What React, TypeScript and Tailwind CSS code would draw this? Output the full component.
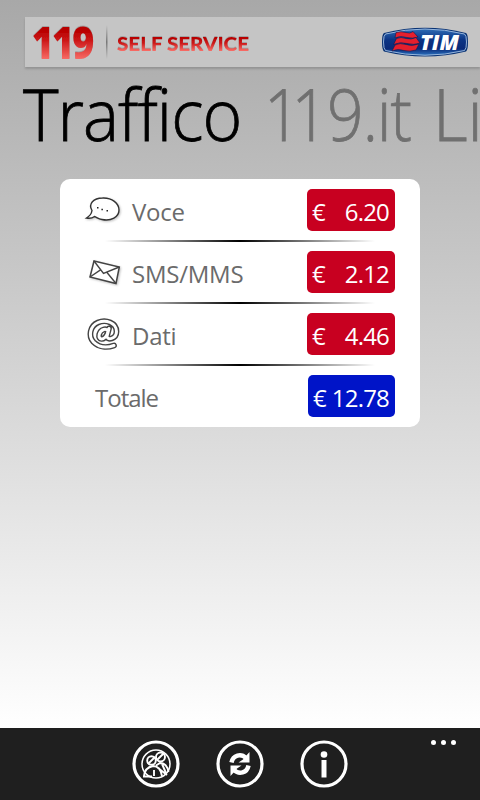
import type { ReactNode } from "react";

function HeaderBanner() {
  return (
    <header className="ml-[25px] mt-[17px] h-[50px] shrink-0 bg-[#c5c5c5] shadow-[0_2px_2px_rgba(0,0,0,0.16)]">
      <svg width="455" height="50" viewBox="0 0 455 50" aria-label="119 Self Service TIM" className="overflow-visible">
        <defs>
          <linearGradient id="red" x1="0" y1="10" x2="0" y2="43" gradientUnits="userSpaceOnUse">
            <stop offset="0.1" stopColor="#b80000" />
            <stop offset="0.4" stopColor="#cc1818" />
            <stop offset="1" stopColor="#fa6e68" />
          </linearGradient>
          <linearGradient id="redSmall" x1="0" y1="21" x2="0" y2="34" gradientUnits="userSpaceOnUse">
            <stop offset="0" stopColor="#b80000" />
            <stop offset="0.4" stopColor="#cc1c1c" />
            <stop offset="1" stopColor="#fa6e68" />
          </linearGradient>
          <linearGradient id="divider" x1="0" y1="0" x2="0" y2="1">
            <stop offset="0" stopColor="#777" stopOpacity="0" />
            <stop offset="0.5" stopColor="#777" />
            <stop offset="1" stopColor="#777" stopOpacity="0" />
          </linearGradient>
          <linearGradient id="blue" x1="0" y1="0" x2="0" y2="1">
            <stop offset="0" stopColor="#2e6cb4" />
            <stop offset="0.4" stopColor="#0c3585" />
            <stop offset="0.75" stopColor="#0a2a78" />
            <stop offset="1" stopColor="#2a70bd" />
          </linearGradient>
          <filter id="glow" x="-10%" y="-20%" width="120%" height="140%">
            <feDropShadow dx="0" dy="-0.5" stdDeviation="0.7" floodColor="#444" floodOpacity="0.55" />
          </filter>
        </defs>
        <g filter="url(#glow)">
          <text
            transform="scale(0.86 1)"
            x="8 31.500 55"
            y="42"
            fill="url(#red)"
            fontFamily="Open Sans, sans-serif"
            fontWeight="800"
            fontSize="44"
          >
            119
          </text>
          <text x="92" y="34" fill="url(#redSmall)" fontFamily="Lato, sans-serif" fontWeight="900" fontSize="18" textLength="132" lengthAdjust="spacingAndGlyphs">
            SELF SERVICE
          </text>
        </g>
        <rect x="81" y="8" width="1.500" height="34" fill="url(#divider)" />
        <path
          d="M359 16Q400 5.500 441 16Q443 17 443 25Q443 33 441 34.500Q400 44.500 359 34.500Q357 33 357 25Q357 17 359 16Z"
          fill="#0a3374"
        />
        <path
          d="M360.500 17Q400 7 439.500 17Q441.500 18 441.500 25Q441.500 32 439.500 33.500Q400 43 360.500 33.500Q358.500 32 358.500 25Q358.500 18 360.500 17Z"
          fill="url(#blue)"
          stroke="#a5c1e3"
          strokeWidth="0.900"
        />
        <g fill="#e51f2d" stroke="#061d58" strokeWidth="0.600">
          <path d="M371 15.500Q376 14 381 15.500Q385 17 388 14.500L393 20Q388 22 382 20.500Q375 18.500 370 21Z" />
          <path d="M371.500 21.500Q376 19.500 381 21.500Q386 23 391 20.500L395 26Q389 28.500 382 26.500Q375 24.500 368.500 27.500Z" />
          <path d="M370 28Q375 25.500 381 27.500Q387 29.500 394 27L391 33Q385 35 379 33.500Q373 31.500 367 34Z" />
        </g>
        <text x="395" y="33" fill="#fff" fontFamily="Open Sans, sans-serif" fontWeight="800" fontStyle="italic" fontSize="21" textLength="39" lengthAdjust="spacingAndGlyphs">
          TIM
        </text>
      </svg>
    </header>
  );
}

function SpeechIcon() {
  return (
    <svg width="40" height="40" viewBox="0 0 40 40" fill="none" className="[filter:drop-shadow(1px_1px_1px_#9999)]">
      <path
        d="M9 20.500C5 14 10.500 8 19.500 8C29 7.500 36 13.500 36 20C36 27 28 31.500 19 29.500C15 29 13.500 27 11.500 26.500C9.500 28 6.500 28.500 3.500 28C6 26.500 8.500 24 9 20.500Z"
        fill="#fff"
        stroke="#333"
        strokeWidth="1.400"
      />
      <path d="M14 17.700h1.500M18.400 19.400h1.500M23.500 20.700h1.500" stroke="#222" strokeWidth="1.500" />
    </svg>
  );
}

function MailIcon() {
  return (
    <svg width="40" height="40" viewBox="0 0 40 40" fill="none" className="[filter:drop-shadow(1px_1px_1px_#9999)]">
      <path d="M11 9L36.300 15L33 31.500L7 25Z" fill="#fff" stroke="#444" strokeWidth="1.500" />
      <path d="M11 9L20.500 21.500L36.300 15M7 25L17.500 17.800M33 31.500L24 20.500" stroke="#444" strokeWidth="1.400" />
    </svg>
  );
}

function AtIcon() {
  const curve =
    "M25 17.500C24 13.500 17.500 15 16.200 20.500C15 26 21 27 24.200 20L26 14.500L24 22C23.500 27 33.500 25 33.500 17.500C33.500 9 23 5 15 8.500C7 12 5 22 10.500 28C16 33.500 24 34 31 31.500";
  return (
    <svg width="40" height="40" viewBox="0 0 40 40" fill="none" strokeLinejoin="round">
      <path d={curve} stroke="#444" strokeWidth="5.800" strokeLinecap="round" />
      <path d={curve} stroke="#fff" strokeWidth="3" strokeLinecap="round" />
    </svg>
  );
}

function Amount({ value, blue = false }: { value: string; blue?: boolean }) {
  return (
    <div
      className={`ml-auto mr-[25px] flex h-[42px] shrink-0 items-center justify-between rounded-[5px] pl-[5px] pr-[6px] pt-[3px] text-white ${
        blue ? "w-[87px] bg-[#0014c8]" : "w-[88px] bg-[#c80020]"
      }`}
    >
      <span>€</span>
      <span className="tracking-[-0.8px]">{value}</span>
    </div>
  );
}

function Divider() {
  return <div className="mx-[45px] h-[2px] shrink-0 bg-linear-to-r from-black/0 via-black to-black/0" />;
}

function Row({ icon, label, value }: { icon: ReactNode; label: string; value: string }) {
  return (
    <div className="flex h-[60px] items-center pl-[23px]">
      {icon}
      <span className="ml-[9px] pt-[4px] tracking-[-0.25px]">{label}</span>
      <Amount value={value} />
    </div>
  );
}

function AppBar() {
  return (
    <footer className="flex h-[72px] shrink-0 items-start bg-[#1f1f1f] pl-[132px] pt-3">
      <div className="flex gap-9">
        <svg width="48" height="48" viewBox="0 0 48 48" fill="none" stroke="#fff">
          <circle cx="24" cy="24" r="22" strokeWidth="3.200" />
          <circle cx="24" cy="24" r="14" strokeWidth="1.500" />
          <g strokeWidth="1.900">
            <circle cx="19.500" cy="20.500" r="4.300" />
            <circle cx="28.500" cy="17" r="4.500" />
            <path d="M12 36C12.500 30 16 27 21 26C27 26 29 30 30 36M11 36.500H20M24 25.500L28 23Q35 23 36.500 32M16 24L23 17M25 20L32 13M22 30V36M26 28L35 35M30 24L34 33" />
          </g>
        </svg>
        <svg width="48" height="48" viewBox="0 0 48 48" fill="none" stroke="#fff">
          <circle cx="24" cy="24" r="22" strokeWidth="3.200" />
          <path d="M15.500 22.500C17 15 25 13 30 18M32.500 25.500C31 33 23 35 18 30" strokeWidth="4.500" />
          <path d="M33.500 12V22.500H22.500L27 19.500L29 17ZM14.500 36V25.500H25.500L21 28.500L19 31Z" fill="#fff" stroke="none" />
        </svg>
        <svg width="48" height="48" viewBox="0 0 48 48" fill="none" stroke="#fff">
          <circle cx="24" cy="24" r="22" strokeWidth="3.200" />
          <circle cx="24" cy="14.500" r="3.300" fill="#fff" stroke="none" />
          <path d="M24 20V37.500" strokeWidth="5" />
        </svg>
      </div>
      <div className="ml-[83px] flex gap-[5px]">
        <i className="size-[5px] rounded-full bg-white" />
        <i className="size-[5px] rounded-full bg-white" />
        <i className="size-[5px] rounded-full bg-white" />
      </div>
    </footer>
  );
}

export default function App() {
  return (
    <div className="flex h-[800px] w-[480px] flex-col overflow-hidden bg-[#1f1f1f] font-['Open_Sans','Noto_Sans',sans-serif]">
      <main className="flex h-[728px] shrink-0 flex-col bg-linear-to-b from-[#a8a8a8] to-white">
        <HeaderBanner />
        <nav className="flex h-[112px] shrink-0 whitespace-nowrap text-[71px] font-light leading-[94px] [-webkit-text-stroke:0.8px_currentColor]">
          <span className="ml-[23px] w-[241px] shrink-0 origin-left scale-x-[0.955] tracking-[-1px] text-black [font-variant-ligatures:none]">
            Traffico
          </span>
          <span className="w-[169px] shrink-0 origin-left scale-x-[0.9] tracking-[-1px] text-[#707070]">
            <span className="tracking-[-10px]">1</span>19.it
          </span>
          <span className="shrink-0 origin-left scale-x-[0.95] text-[#707070]">Li</span>
        </nav>
        <section className="mx-[60px] flex h-[248px] shrink-0 flex-col rounded-[10px] bg-white text-2xl text-[#6b6b6b]">
          <div className="pt-px">
            <Row icon={<SpeechIcon />} label="Voce" value="6.20" />
          </div>
          <Divider />
          <Row icon={<MailIcon />} label="SMS/MMS" value="2.12" />
          <Divider />
          <Row icon={<AtIcon />} label="Dati" value="4.46" />
          <Divider />
          <div className="flex h-[60px] items-center pl-[35px]">
            <span className="pt-[4px] tracking-[-1px]">Totale</span>
            <Amount value="12.78" blue />
          </div>
        </section>
      </main>
      <AppBar />
    </div>
  );
}
